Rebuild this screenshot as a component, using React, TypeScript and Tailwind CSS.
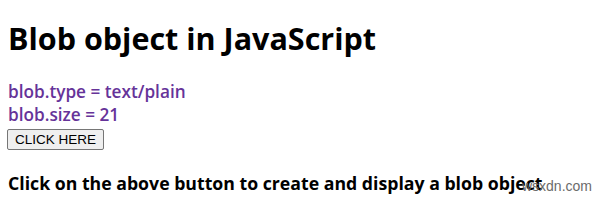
import React from 'react';

export default function App() {
  return (
    <div className="relative w-[600px] h-[201px] bg-white px-2 overflow-hidden" style={{ fontFamily: '"Open Sans", "Noto Sans", sans-serif' }}>
      <h1 className="pt-[18px] text-[30.5px] leading-[40px] font-bold text-black">Blob object in JavaScript</h1>
      <div className="mt-[22px] text-[17.2px] leading-[23px] font-semibold text-[#663399]">
        <div>blob.type = text/plain</div>
        <div>blob.size = 21</div>
      </div>
      <button
        className="-ml-[1px] h-[21px] px-[7px] border border-[#767676] rounded-[2px] bg-[#efefef] text-[13.5px] leading-none text-black"
        style={{ fontFamily: '"Liberation Sans", Arial, sans-serif' }}
      >
        CLICK HERE
      </button>
      <p className="mt-[21px] text-[17.7px] leading-[24px] font-bold text-black">
        Click on the above button to create and display a blob object
      </p>
      <span className="absolute right-[8px] bottom-[4px] text-[14px] text-[#6b6b6b]" style={{ fontFamily: '"Liberation Sans", Arial, sans-serif' }}>
        wsxdn.com
      </span>
    </div>
  );
}
